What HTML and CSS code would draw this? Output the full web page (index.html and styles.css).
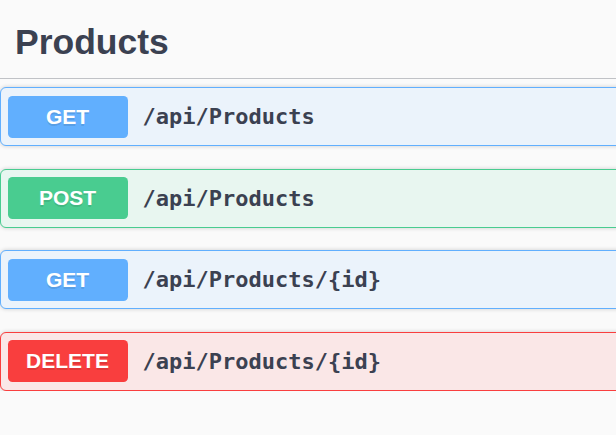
FILE: index.html
```html
<!DOCTYPE html>
<html lang="en">
<head>
<meta charset="utf-8">
<title>Products</title>
<link rel="stylesheet" href="styles.css">
</head>
<body>
<section class="tag-section">
  <h3 class="tag">Products</h3>
  <div class="ops">
    <div class="op op-get">
      <span class="method">GET</span>
      <span class="path">/api/Products</span>
    </div>
    <div class="op op-post">
      <span class="method">POST</span>
      <span class="path">/api/Products</span>
    </div>
    <div class="op op-get">
      <span class="method">GET</span>
      <span class="path">/api/Products/{id}</span>
    </div>
    <div class="op op-delete">
      <span class="method">DELETE</span>
      <span class="path">/api/Products/{id}</span>
    </div>
  </div>
</section>
</body>
</html>
```

FILE: styles.css
```css
html, body {
  margin: 0;
  padding: 0;
  background: #fafafa;
  overflow: hidden;
}

.tag-section {
  width: 640px;
}

.tag {
  margin: 0 0 8px 0;
  padding: 22px 30px 16px 15px;
  font-family: "Liberation Sans", Arial, sans-serif;
  font-weight: bold;
  font-size: 35.5px;
  line-height: 40px;
  color: #3b4151;
  border-bottom: 1.5px solid rgba(59, 65, 81, 0.3);
}

.ops {
  display: flex;
  flex-direction: column;
  gap: 22.5px;
}

.op {
  display: flex;
  align-items: center;
  padding: 7.5px 6.5px;
  border: 1.5px solid;
  border-radius: 6px;
  box-shadow: 0 0 4px rgba(0, 0, 0, 0.19);
}

.op-get {
  background: #ebf3fb;
  border-color: #61affe;
}

.op-post {
  background: #e8f6f0;
  border-color: #49cc90;
}

.op-delete {
  background: #fae7e7;
  border-color: #f93e3e;
}

.method {
  width: 120px;
  height: 42px;
  display: flex;
  align-items: center;
  justify-content: center;
  border-radius: 4.5px;
  color: #fff;
  font-family: "Liberation Sans", Arial, sans-serif;
  font-weight: bold;
  font-size: 21px;
  text-shadow: 0 1.5px 0 rgba(0, 0, 0, 0.1);
}

.op-get .method { background: #61affe; }
.op-post .method { background: #49cc90; }
.op-delete .method { background: #f93e3e; }

.path {
  padding: 0 15px;
  font-family: "DejaVu Sans Mono", monospace;
  font-weight: bold;
  font-size: 22px;
  color: #3b4151;
}
```
